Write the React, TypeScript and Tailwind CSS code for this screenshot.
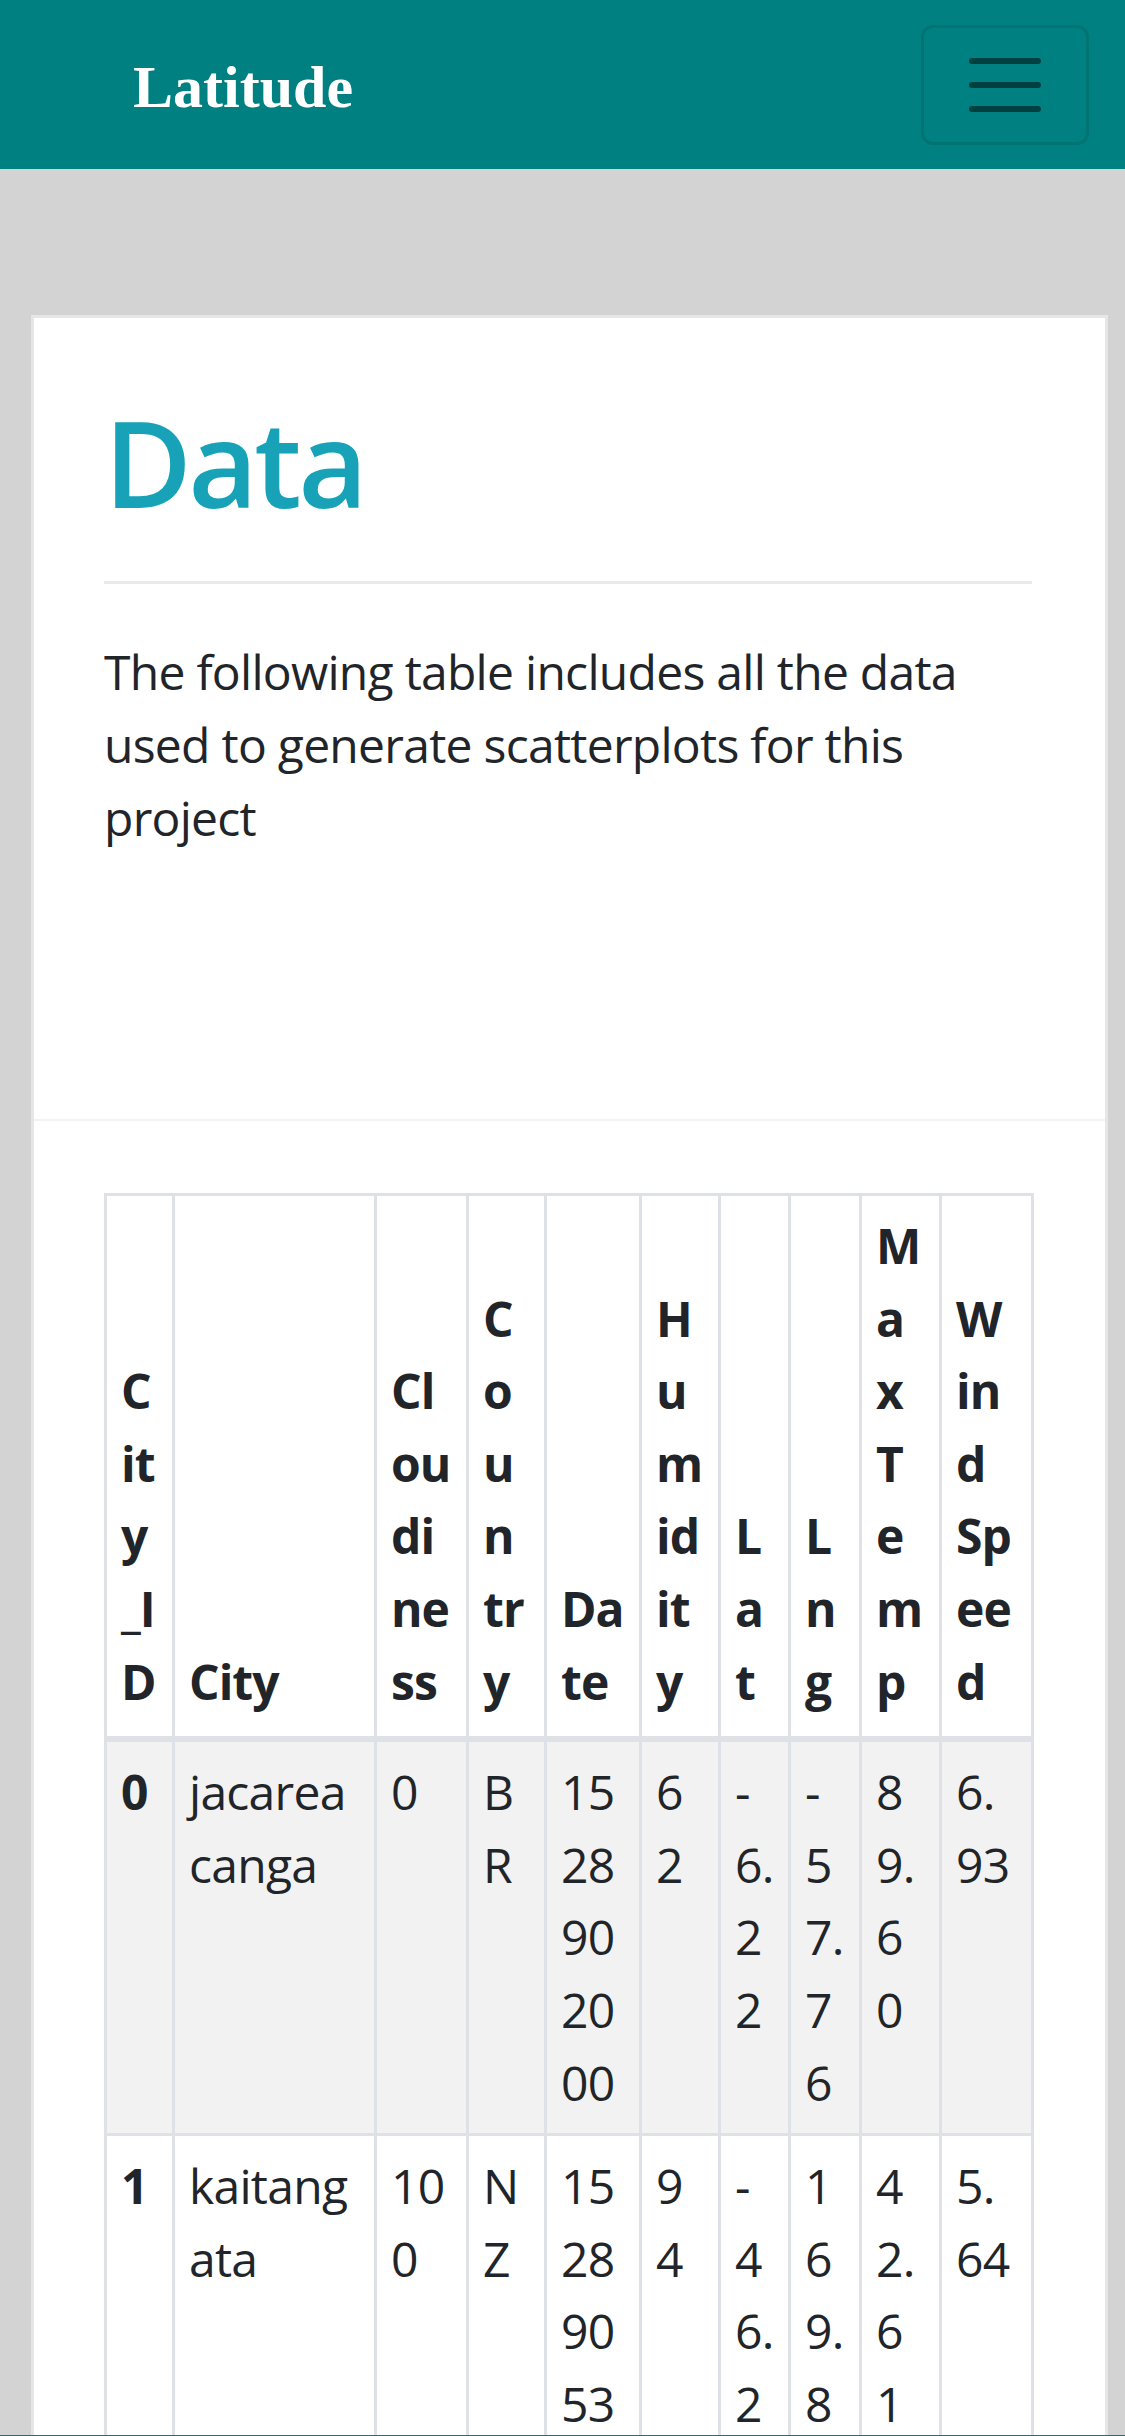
import React from "react";

const headers: string[][] = [
  ["C", "it", "y", "_I", "D"],
  ["City"],
  ["Cl", "ou", "di", "ne", "ss"],
  ["C", "o", "u", "n", "tr", "y"],
  ["Da", "te"],
  ["H", "u", "m", "id", "it", "y"],
  ["L", "a", "t"],
  ["L", "n", "g"],
  ["M", "a", "x", "T", "e", "m", "p"],
  ["W", "in", "d", "Sp", "ee", "d"],
];

const rows: string[][][] = [
  [
    ["0"],
    ["jacarea", "canga"],
    ["0"],
    ["B", "R"],
    ["15", "28", "90", "20", "00"],
    ["6", "2"],
    ["-", "6.", "2", "2"],
    ["-", "5", "7.", "7", "6"],
    ["8", "9.", "6", "0"],
    ["6.", "93"],
  ],
  [
    ["1"],
    ["kaitang", "ata"],
    ["10", "0"],
    ["N", "Z"],
    ["15", "28", "90", "53", "00"],
    ["9", "4"],
    ["-", "4", "6.", "2", "8"],
    ["1", "6", "9.", "8", "5"],
    ["4", "2.", "6", "1"],
    ["5.", "64"],
  ],
];

const colClasses = [
  "w-[68px]",
  "w-[202px]",
  "w-[92px]",
  "w-[78px]",
  "w-[95px]",
  "w-[79px]",
  "w-[70px]",
  "w-[71px]",
  "w-[80px]",
  "w-[92px]",
];

function Lines({ lines }: { lines: string[] }) {
  return (
    <>
      {lines.map((l, i) => (
        <div key={i}>{l}</div>
      ))}
    </>
  );
}

export default function App() {
  return (
    <div className="min-h-screen bg-[#d3d3d3] font-['Open_Sans','Noto_Sans',sans-serif] text-[#212529]">
      <nav className="h-[169px] bg-[#008080] flex items-center justify-between pl-[133px] pr-[36px]">
        <span className="mt-[4px] font-['Liberation_Serif','Times_New_Roman',serif] font-bold text-[60px] leading-none text-white">
          Latitude
        </span>
        <button className="w-[168px] h-[120px] border-[3px] border-[#007373] rounded-[12px] flex items-center justify-center">
          <svg width="90" height="90" viewBox="0 0 30 30" fill="none">
            <path
              stroke="rgba(0,0,0,0.5)"
              strokeLinecap="round"
              strokeWidth="2"
              d="M4 7h22M4 15h22M4 23h22"
            />
          </svg>
        </button>
      </nav>

      <main className="pt-[146px] pl-[31px] pr-[17px]">
        <div className="bg-white border-[3px] border-[#e6e6e6]">
          <section className="pt-[72px] pl-[70px] pr-[73px] pb-[265px]">
            <h1 className="text-[120px] leading-[144px] font-semibold text-[#17a2b8] tracking-[-0.03em]">
              Data
            </h1>
            <hr className="mt-[47px] border-0 h-[3px] bg-[#e9e9e9]" />
            <p className="mt-[51px] text-[48px] leading-[73px] tracking-[-0.015em]">
              The following table includes all the data used to generate scatterplots for this project
            </p>
          </section>
          <section className="border-t-[2px] border-[#f3f3f3] pt-[72px] pl-[70px] pr-[73px]">
            <table className="w-[930px] table-fixed border-collapse text-[48px] leading-[72.6px]">
              <colgroup>
                {colClasses.map((c, i) => (
                  <col key={i} className={c} />
                ))}
              </colgroup>
              <thead>
                <tr>
                  {headers.map((h, i) => (
                    <th
                      key={i}
                      className="align-bottom text-left font-bold whitespace-nowrap px-[14px] pt-[14px] pb-[18px] border-[3px] border-b-[6px] border-[#dee2e6] tracking-[-0.02em]"
                    >
                      <Lines lines={h} />
                    </th>
                  ))}
                </tr>
              </thead>
              <tbody>
                {rows.map((r, ri) => (
                  <tr key={ri} className={ri % 2 === 0 ? "bg-[#f2f2f2]" : "bg-white"}>
                    {r.map((cell, ci) =>
                      ci === 0 ? (
                        <th
                          key={ci}
                          className="align-top text-left font-bold whitespace-nowrap px-[14px] py-[14px] border-[3px] border-[#dee2e6]"
                        >
                          <Lines lines={cell} />
                        </th>
                      ) : (
                        <td
                          key={ci}
                          className="align-top text-left whitespace-nowrap px-[14px] py-[14px] border-[3px] border-[#dee2e6] tracking-[-0.015em]"
                        >
                          <Lines lines={cell} />
                        </td>
                      )
                    )}
                  </tr>
                ))}
              </tbody>
            </table>
          </section>
        </div>
      </main>
      <div className="fixed bottom-0 left-0 right-0 h-[1px] bg-[#008080]" />
    </div>
  );
}
